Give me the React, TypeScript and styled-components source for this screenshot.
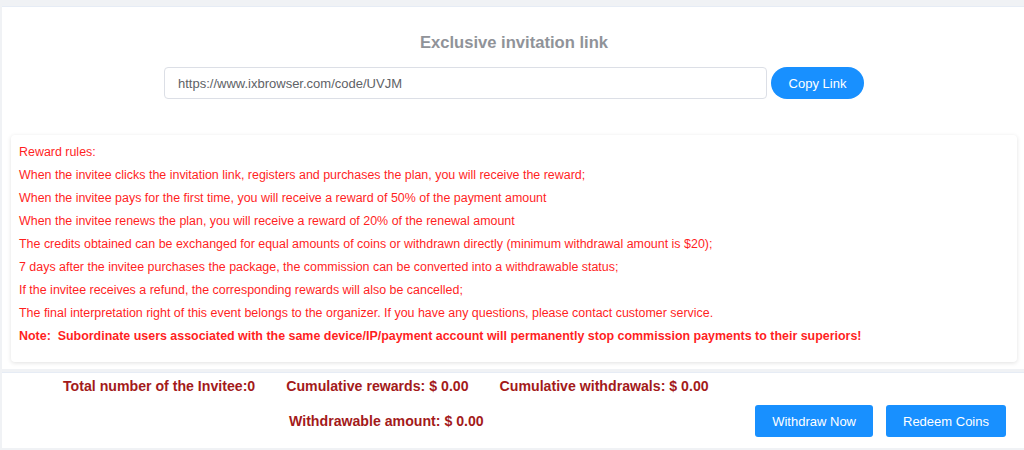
import React from "react";
import styled, { createGlobalStyle } from "styled-components";

const Global = createGlobalStyle`
  html, body { margin: 0; padding: 0; background: #f0f2f5; }
  body { font-family: "Liberation Sans", Arial, sans-serif; }
  * { box-sizing: border-box; }
`;

const Page = styled.div`
  width: 1024px;
  height: 450px;
  padding: 6px 0 0 2px;
  display: flex;
  flex-direction: column;
  gap: 3px;
  overflow: hidden;
`;

const TopCard = styled.section`
  background: #fff;
  border-top: 1px solid #e6ecf5;
  padding: 24px 7px 7px 9px;
  display: flex;
  flex-direction: column;
`;

const Title = styled.h2`
  margin: 0;
  text-align: center;
  font-size: 16.6px;
  font-weight: bold;
  color: #909399;
  line-height: 24px;
`;

const LinkRow = styled.div`
  display: flex;
  justify-content: center;
  align-items: center;
  gap: 4px;
  margin-top: 12px;
`;

const LinkInput = styled.input`
  width: 603px;
  height: 32px;
  border: 1px solid #dcdfe6;
  border-radius: 4px;
  padding: 0 13px;
  font-family: "Liberation Sans", Arial, sans-serif;
  font-size: 13px;
  color: #606266;
  outline: none;
  background: #fff;
`;

const PillButton = styled.button`
  height: 32px;
  width: 93px;
  border: none;
  border-radius: 16px;
  background: #1890ff;
  color: #fff;
  font-family: "Liberation Sans", Arial, sans-serif;
  font-size: 13px;
  cursor: pointer;
`;

const RulesBox = styled.div`
  margin-top: 36px;
  background: #fff;
  border-radius: 4px;
  box-shadow: 0 1px 4px rgba(0, 0, 0, 0.12);
  padding: 6px 8px 14px 8px;
  display: flex;
  flex-direction: column;
`;

const Rule = styled.p<{ $bold?: boolean }>`
  margin: 0;
  font-size: 12.45px;
  line-height: 23px;
  color: #ff1f1f;
  font-weight: ${(p) => (p.$bold ? "bold" : "normal")};
`;

const BottomCard = styled.section`
  background: #fff;
  border-top: 1px solid #e6ecf5;
  height: 76px;
  padding: 5px 18px 11px 0;
  display: flex;
  align-items: flex-end;
  justify-content: space-between;
`;

const Stats = styled.div`
  display: flex;
  flex-direction: column;
  gap: 18px;
  align-self: flex-start;
`;

const StatRow = styled.div<{ $indent: number }>`
  display: flex;
  gap: 31px;
  padding-left: ${(p) => p.$indent}px;
`;

const Stat = styled.span`
  font-size: 14.15px;
  font-weight: bold;
  color: #a31a1a;
  line-height: 17px;
`;

const Actions = styled.div`
  display: flex;
  gap: 13px;
`;

const ActionButton = styled.button`
  height: 32px;
  padding: 0 17px;
  border: none;
  border-radius: 3px;
  background: #1890ff;
  color: #fff;
  font-family: "Liberation Sans", Arial, sans-serif;
  font-size: 13px;
  cursor: pointer;
`;

const rules = [
  "Reward rules:",
  "When the invitee clicks the invitation link, registers and purchases the plan, you will receive the reward;",
  "When the invitee pays for the first time, you will receive a reward of 50% of the payment amount",
  "When the invitee renews the plan, you will receive a reward of 20% of the renewal amount",
  "The credits obtained can be exchanged for equal amounts of coins or withdrawn directly (minimum withdrawal amount is $20);",
  "7 days after the invitee purchases the package, the commission can be converted into a withdrawable status;",
  "If the invitee receives a refund, the corresponding rewards will also be cancelled;",
  "The final interpretation right of this event belongs to the organizer. If you have any questions, please contact customer service.",
];

export default function App() {
  return (
    <>
      <Global />
      <Page>
        <TopCard>
          <Title>Exclusive invitation link</Title>
          <LinkRow>
            <LinkInput readOnly value="https://www.ixbrowser.com/code/UVJM" />
            <PillButton>Copy Link</PillButton>
          </LinkRow>
          <RulesBox>
            {rules.map((r) => (
              <Rule key={r}>{r}</Rule>
            ))}
            <Rule $bold>
              Note:&nbsp; Subordinate users associated with the same device/IP/payment account will permanently stop commission payments to their superiors!
            </Rule>
          </RulesBox>
        </TopCard>
        <BottomCard>
          <Stats>
            <StatRow $indent={61}>
              <Stat>Total number of the Invitee:0</Stat>
              <Stat>Cumulative rewards: $ 0.00</Stat>
              <Stat>Cumulative withdrawals: $ 0.00</Stat>
            </StatRow>
            <StatRow $indent={287}>
              <Stat>Withdrawable amount: $ 0.00</Stat>
            </StatRow>
          </Stats>
          <Actions>
            <ActionButton>Withdraw Now</ActionButton>
            <ActionButton>Redeem Coins</ActionButton>
          </Actions>
        </BottomCard>
      </Page>
    </>
  );
}
